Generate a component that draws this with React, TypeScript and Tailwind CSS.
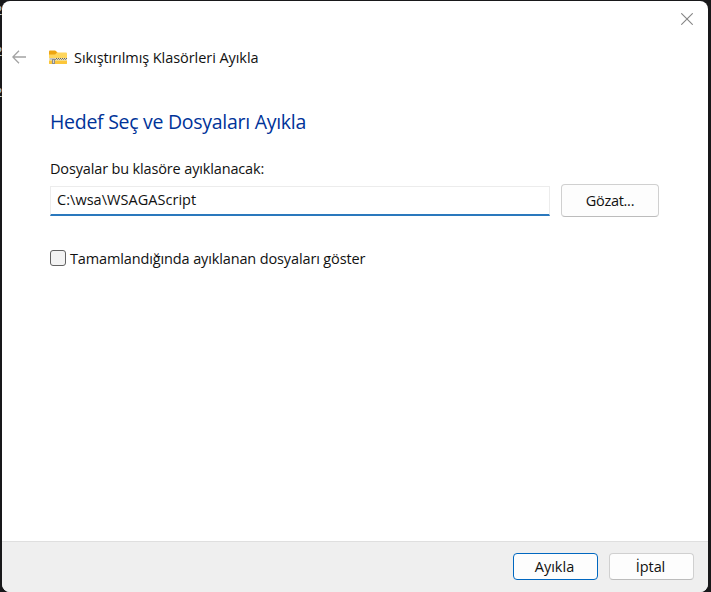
import React from 'react';

function FolderZipIcon() {
  return (
    <svg width="18" height="15" viewBox="0 0 18 15" className="block shrink-0">
      <path d="M0 1.600C0 .9.5.4 1.200.4h4.600c.5 0 .9.2 1.200.5L8.300 2.400V6H0z" fill="#eda511" />
      <path d="M0 4.500h6.200L8 2.400h8.900c.6 0 1.100.5 1.100 1.100V13c0 .6-.5 1-1.100 1H1.100C.5 14 0 13.600 0 13z" fill="#ffd65c" />
      <path d="M0 11h18v2c0 .6-.5 1-1.100 1H1.100C.5 14 0 13.600 0 13z" fill="#fcc63a" />
      <path d="M0 8h18v2.500H0z" fill="#eadfb8" />
      <path d="M5 8.500h13" stroke="#66645f" strokeWidth="1" strokeDasharray="1 1" />
      <path d="M6 9.500h12" stroke="#8c897f" strokeWidth="1" strokeDasharray="1 1" />
      <path d="M1 8h5v2H1z" fill="#c6c5c2" />
      <path d="M3 9h3v5H3z" fill="#8f8d89" />
      <path d="M4 10h1v3H4z" fill="#d9d7d1" />
    </svg>
  );
}

export default function App() {
  return (
    <div className="flex h-[592px] w-[711px] overflow-hidden bg-[#18181a] font-['Open_Sans','Noto_Sans',sans-serif] text-[14.5px] text-[#111111]">
      <div className="relative w-[2px] shrink-0 text-[13px] text-[#b9cbe0]">
        <span className="absolute -left-[5px] top-px leading-[18px]">2</span>
        <span className="absolute -left-[5px] top-[42px] leading-[18px]">2</span>
        <span className="absolute -left-[5px] top-[83px] leading-[18px]">2</span>
      </div>
      <main className="relative mt-px flex h-[591px] w-[706px] flex-col overflow-hidden rounded-[8px] bg-white">
        <div className="flex h-[36px] shrink-0 items-center justify-end pr-[15px]">
          <button aria-label="Kapat">
            <svg width="12" height="12" viewBox="0 0 12 12" className="block" fill="none" stroke="#858585" strokeWidth="1.100">
              <path d="M.3.3l11.400 11.400M11.700.3L.3 11.700" />
            </svg>
          </button>
        </div>
        <header className="flex h-[40px] shrink-0 items-center pl-[10px]">
          <svg width="14" height="14" viewBox="0 0 14 14" className="block shrink-0" fill="none" stroke="#a3a3a3" strokeWidth="1.300">
            <path d="M14 7H.8M7 .8L.8 7 7 13.200" />
          </svg>
          <div className="ml-[23px] flex items-center gap-[7px]">
            <FolderZipIcon />
            <span className="whitespace-nowrap pt-[2px] leading-5 tracking-[-0.06px]">Sıkıştırılmış Klasörleri Ayıkla</span>
          </div>
        </header>
        <section className="flex min-h-0 flex-1 flex-col items-start pl-[48px] pt-[32px]">
          <h1 className="whitespace-nowrap text-[19.5px] leading-[26px] tracking-[-0.28px] text-[#003399]">Hedef Seç ve Dosyaları Ayıkla</h1>
          <label className="mt-[24px] whitespace-nowrap leading-5 tracking-[-0.15px]">Dosyalar bu klasöre ayıklanacak:</label>
          <div className="mt-[5px] flex gap-[11px]">
            <div className="mt-[2px] flex h-[30px] w-[500px] border border-b-2 border-[#ececec] border-b-[#2a78bd] pl-[6px]">
              <span className="whitespace-nowrap leading-[26px] tracking-[0.04px]">C:\wsa\WSAGAScript</span>
            </div>
            <button className="h-[33px] w-[98px] rounded-[4px] border border-[#d0d0d0] border-b-[#bcbcbc] bg-[#fdfdfd] tracking-[-0.3px]">Gözat...</button>
          </div>
          <div className="mt-[31px] flex items-center gap-[4px]">
            <span className="-mt-px h-4 w-4 rounded-[3px] border border-[#626262] bg-[#f3f3f3]" />
            <span className="whitespace-nowrap pt-px leading-5 tracking-[-0.13px]">Tamamlandığında ayıklanan dosyaları göster</span>
          </div>
        </section>
        <footer className="flex h-[51px] shrink-0 items-start justify-end gap-[11px] border-t border-[#dfdfdf] bg-[#efefef] pr-[14px] pt-[11px]">
          <button className="h-[27px] w-[85px] rounded-[4px] border border-[#0067c0] bg-[#fdfdfd] pr-[2px] tracking-[0px]">Ayıkla</button>
          <button className="h-[27px] w-[85px] rounded-[4px] border border-[#d0d0d0] border-b-[#bcbcbc] bg-[#fdfdfd] pr-[2px] tracking-[-0.1px]">İptal</button>
        </footer>
      </main>
    </div>
  );
}
